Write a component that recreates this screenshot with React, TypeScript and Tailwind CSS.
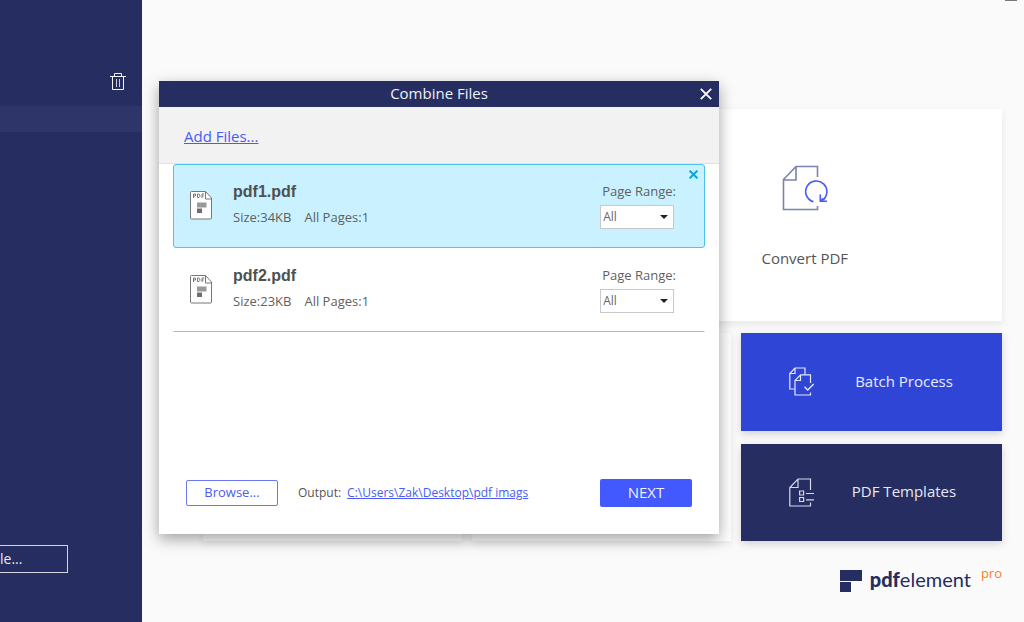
import type { ReactNode } from "react";

function TrashIcon() {
  return (
    <svg width="16" height="18" viewBox="0 0 16 18" fill="none" stroke="#f4f4f8" aria-hidden="true">
      <path d="M0 3.5h16M4.5 3.5v-3h7v3M2.5 3.5v13h11v-13" />
      <path d="M6.5 6v8M9.5 6v8" stroke="#c9cbdc" />
    </svg>
  );
}

function PdfFileIcon() {
  return (
    <svg width="23" height="29" viewBox="0 0 23 29" fill="none" aria-hidden="true">
      <path d="M1.5 .5h14l6 6.500v20a1 1 0 0 1-1 1H1.500a1 1 0 0 1-1-1V1.500a1 1 0 0 1 1-1z" fill="#fff" stroke="#777" />
      <path d="M15.500 .5v7.500H22" stroke="#777" />
      <path
        d="M3.500 7V3h2v2h-2M7.500 3v3.500h1.500l.8-.8V3.800L9 3zM12 7V3h2.200M12 5h1.700"
        stroke="#777"
        strokeWidth="1"
      />
      <path d="M7 11.500h9.500v5H7z" fill="#999" />
      <path d="M7 17.500h5v4.500H7z" fill="#6e6e6e" />
    </svg>
  );
}

function ConvertIcon() {
  return (
    <svg width="46" height="46" viewBox="0 0 46 46" fill="none" strokeWidth="1.6" aria-hidden="true">
      <path d="M35.500 12V1.500H14L1.500 14.500V44.500h34V41M14 1.500v13.500H1.500" stroke="#7c82aa" />
      <path d="M31.500 36.800A10.600 10.600 0 1 1 40 35.500" stroke="#4a5cf5" />
      <path d="M38.300 29.500v6.800h6.700M38.300 36.300l3-3" stroke="#4a5cf5" />
    </svg>
  );
}

function BatchIcon() {
  return (
    <svg width="25" height="29" viewBox="0 0 25 29" fill="none" stroke="#e4e7fb" strokeWidth="1.200" aria-hidden="true">
      <path d="M16 7.500V1H6L.8 6.500V22H6M6 1v5.500H.8" />
      <path d="M21.500 16V7.800H11.500L6 13.500V28h15.500v-2.500M11.500 7.800v5.700H6" />
      <path d="M15.500 19.800l3.200 3.200 6-6" strokeWidth="1.400" />
    </svg>
  );
}

function TemplatesIcon() {
  return (
    <svg width="25" height="29" viewBox="0 0 25 29" fill="none" stroke="#d6d8e6" strokeWidth="1.200" aria-hidden="true">
      <path d="M21.500 12V1H9L.8 9.500V28h20.700v-3.500M9 1v8.500H.8" />
      <path d="M10.600 13h4v4h-4zM10.600 19.500h4v4h-4zM17 15.500h8M17 21.800h8" />
    </svg>
  );
}

function CloseIcon({ size, weight }: { size: number; weight: number }) {
  return (
    <svg width={size} height={size} viewBox="0 0 12 12" fill="none" stroke="currentColor" strokeWidth={weight} aria-hidden="true">
      <path d="M.8.8l10.400 10.400M11.200.8L.8 11.200" />
    </svg>
  );
}

function Sidebar() {
  return (
    <aside className="flex w-[142px] shrink-0 flex-col bg-[#262d60]">
      <div className="flex h-[106px] items-end justify-end pr-4 pb-[15px]">
        <button type="button" aria-label="Delete">
          <TrashIcon />
        </button>
      </div>
      <div className="h-[26px] bg-[#2e3569]" />
      <button
        type="button"
        className="mt-auto mb-[49px] h-7 w-[68px] border border-l-0 border-[#d3d5e3] text-left text-sm text-[#e6e8f2]"
      >
        le...
      </button>
    </aside>
  );
}

function Tile({ icon, label, tone }: { icon: ReactNode; label: string; tone: string }) {
  return (
    <button type="button" className={`flex flex-1 items-center pl-12 text-[15px] shadow-[0_3px_8px_rgba(0,0,0,0.16)] ${tone}`}>
      {icon}
      <span className="flex-1 pr-2 pb-[2px] text-center">{label}</span>
    </button>
  );
}

function Logo() {
  return (
    <div className="flex items-center gap-2">
      <svg width="22" height="22" viewBox="0 0 22 22" fill="#262d60" aria-hidden="true">
        <path d="M0 0h22v11H0zM0 12h11v10H0z" />
      </svg>
      <div className="pb-1 font-[Lato,sans-serif] text-xl leading-6 text-[#262d60]">
        <b className="font-black">pdf</b>element
      </div>
      <span className="mb-4 ml-[2px] text-[13px] leading-4 text-[#f58220]">pro</span>
    </div>
  );
}

function Home() {
  return (
    <main className="flex min-w-0 flex-1 flex-col pt-[109px] pr-[22px] pl-[61px]">
      <div className="flex h-[212px] gap-[10px]">
        <div className="flex-1 bg-white shadow-[0_3px_8px_rgba(0,0,0,0.08)]" />
        <button
          type="button"
          className="flex flex-1 flex-col items-center bg-white pt-[56px] text-[15px] text-[#555] shadow-[0_3px_8px_rgba(0,0,0,0.08)]"
        >
          <ConvertIcon />
          <span className="mt-9">Convert PDF</span>
        </button>
      </div>
      <div className="mt-3 flex h-[208px] gap-[10px]">
        <div className="flex-1 bg-[#fdfdfd] shadow-[0_3px_8px_rgba(0,0,0,0.08)]" />
        <div className="flex-1 bg-[#fdfdfd] shadow-[0_3px_8px_rgba(0,0,0,0.08)]" />
        <div className="flex w-[261px] flex-col gap-[13px]">
          <Tile icon={<BatchIcon />} label="Batch Process" tone="bg-[#2f45d5] text-[#e9ecff]" />
          <Tile icon={<TemplatesIcon />} label="PDF Templates" tone="bg-[#262d60] text-[#e6e8f2]" />
        </div>
      </div>
      <div className="mt-6 flex justify-end">
        <Logo />
      </div>
    </main>
  );
}

function FileRow({ name, size, selected }: { name: string; size: string; selected?: boolean }) {
  return (
    <li
      className={`relative flex h-[84px] items-start border pt-[14px] pr-7 pl-4 ${
        selected ? "rounded-[3px] border-[#4cc4ee] bg-[#c9f1ff]" : "border-transparent border-b-[#b4b4b4]"
      }`}
    >
      <div className="mt-3">
        <PdfFileIcon />
      </div>
      <div className="ml-5 flex-1 pt-px">
        <div className="font-[Liberation_Sans,Arial,sans-serif] text-base leading-6 font-bold text-[#505050]">{name}</div>
        <div className="mt-[3px] flex gap-[13px] text-[13px] leading-5 text-[#5f5f5f]">
          <span>Size:{size}</span>
          <span>All Pages:1</span>
        </div>
      </div>
      <label className="flex flex-col text-[13px] leading-5 text-[#5f5f5f]">
        <span className="mt-[2px] pl-[2px]">Page Range:</span>
        <span className="relative mt-1 flex w-[74px]">
          <select className="h-6 w-full appearance-none border border-[#c8c8c8] bg-white pl-[2px] text-xs text-[#666]">
            <option>All</option>
          </select>
          <svg className="pointer-events-none absolute top-[10px] right-[6px]" width="8" height="4" viewBox="0 0 8 4" fill="#222" aria-hidden="true">
            <path d="M0 0h8L4 4z" />
          </svg>
        </span>
      </label>
      {selected && (
        <button type="button" aria-label="Remove" className="absolute top-[5px] right-[6px] text-[#0ca6dc]">
          <CloseIcon size={9} weight={2.6} />
        </button>
      )}
    </li>
  );
}

function CombineDialog() {
  return (
    <section
      role="dialog"
      aria-labelledby="combine-title"
      className="absolute top-[81px] left-[159px] flex h-[453px] w-[560px] flex-col bg-white shadow-[0_5px_14px_rgba(0,0,0,0.36)]"
    >
      <header className="relative flex h-[26px] items-center justify-center bg-[#262d60] text-[#eef0f8]">
        <h1 id="combine-title" className="pb-[2px] text-[15px]">Combine Files</h1>
        <button type="button" aria-label="Close" className="absolute right-[7px] text-white">
          <CloseIcon size={12} weight={1.8} />
        </button>
      </header>
      <div className="flex h-[57px] items-center border-b border-[#e2e2e2] bg-[#f2f2f2] px-[25px] pt-[2px]">
        <a href="#add" className="text-[15px] text-[#4a5cf5] underline">Add Files...</a>
      </div>
      <ul className="mx-[14px]">
        <FileRow name="pdf1.pdf" size="34KB" selected />
        <FileRow name="pdf2.pdf" size="23KB" />
      </ul>
      <footer className="mt-auto mb-[27px] flex items-center px-[27px]">
        <button type="button" className="h-[26px] w-[92px] rounded-[2px] border border-[#6a78f6] text-[13px] text-[#4a5cf5]">
          Browse...
        </button>
        <span className="ml-5 text-xs text-[#555]">Output:</span>
        <a href="#output" className="ml-[6px] text-xs text-[#4a5cf5] underline">C:\Users\Zak\Desktop\pdf imags</a>
        <button type="button" className="ml-auto h-7 w-[92px] rounded-[2px] bg-[#4259ff] pb-[2px] text-[15px] text-[#f0f2ff]">
          NEXT
        </button>
      </footer>
    </section>
  );
}

export default function App() {
  return (
    <div className="relative flex h-screen overflow-hidden bg-[#fafafa] font-[Open_Sans,sans-serif]">
      <Sidebar />
      <Home />
      <button type="button" aria-label="Minimize" className="absolute top-0 right-[7px] h-px w-3 bg-[#777]" />
      <CombineDialog />
    </div>
  );
}
